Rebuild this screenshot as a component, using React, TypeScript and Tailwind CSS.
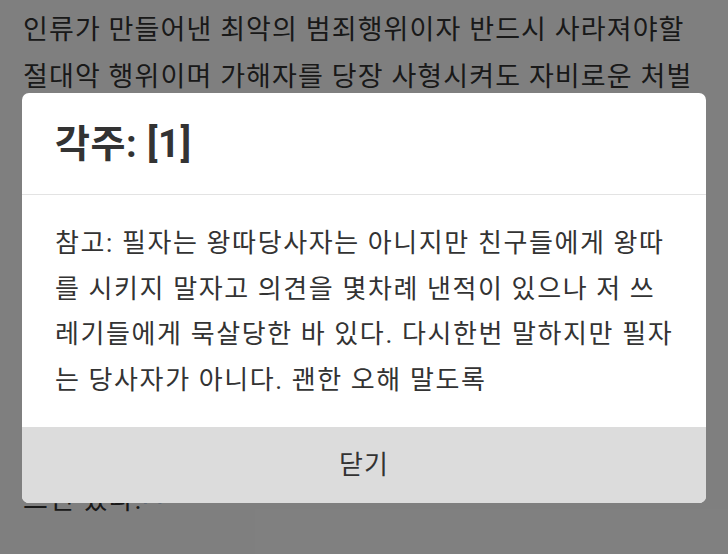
const FONT = "font-['Roboto','Noto_Sans_CJK_KR',sans-serif]";

const bodyLines = [
  "참고: 필자는 왕따당사자는 아니지만 친구들에게 왕따",
  "를 시키지 말자고 의견을 몇차례 낸적이 있으나 저 쓰",
  "레기들에게 묵살당한 바 있다. 다시한번 말하지만 필자",
  "는 당사자가 아니다. 괜한 오해 말도록",
];

const Article = () => (
  <div className="px-[23px] pt-[7px] text-[27px] leading-[47px] text-[#333] tracking-[1.1px]">
    <p>인류가 만들어낸 최악의 범죄행위이자 반드시 사라져야할</p>
    <p>절대악 행위이며 가해자를 당장 사형시켜도 자비로운 처벌</p>
    <p>이 아깝지 않은 행위이다. 이러한 행위를 저지른 자들은</p>
    <p>피해자에게 평생 씻을 수 없는 상처를 남기며 그 상처는</p>
    <p>시간이 지나도 쉽게 아물지 않는다. 학교와 사회 모두가</p>
    <p>이 문제를 외면해서는 안 되며 방관 역시 가해와 다를</p>
    <p>바 없다. 실제로 많은 피해자들이 도움을 청했음에도</p>
    <p>묵살당했고 결국 돌이킬 수 없는 결과로 이어진 사례도</p>
    <p>적지 않다. 필자 역시 이 문제에 대해 목소리를 내려 했</p>
    <p>으나 받아들여지지 않았고 오히려 비웃음을 산 적이 있</p>
    <p>
      으런 있다.<sup className="text-[#1e5bb8] text-[16px]">[1]</sup>
    </p>
  </div>
);

const FootnoteDialog = () => (
  <div className="absolute inset-0 bg-black/50">
    <div className="absolute left-[22px] top-[93px] w-[684px] h-[410px] rounded-[7px] bg-white overflow-hidden flex flex-col">
      <div className="h-[102px] flex items-center px-[33px] border-b border-[#e3e3e3] shrink-0">
        <h3 className="text-[38px] font-bold text-[#333] tracking-[0.5px] pt-[2px]">각주: [1]</h3>
      </div>
      <div className="flex-1 px-[33px] pt-[26px] text-[26px] leading-[45.5px] text-[#333] tracking-[1.6px]">
        {bodyLines.map((line) => (
          <div key={line} className="whitespace-nowrap">
            {line}
          </div>
        ))}
      </div>
      <button className="h-[76px] shrink-0 bg-[#dcdcdc] text-[26px] text-[#333] tracking-[1px]">닫기</button>
    </div>
  </div>
);

export default function App() {
  return (
    <div className={`relative w-[728px] h-[554px] overflow-hidden bg-white ${FONT}`}>
      <Article />
      <FootnoteDialog />
    </div>
  );
}
